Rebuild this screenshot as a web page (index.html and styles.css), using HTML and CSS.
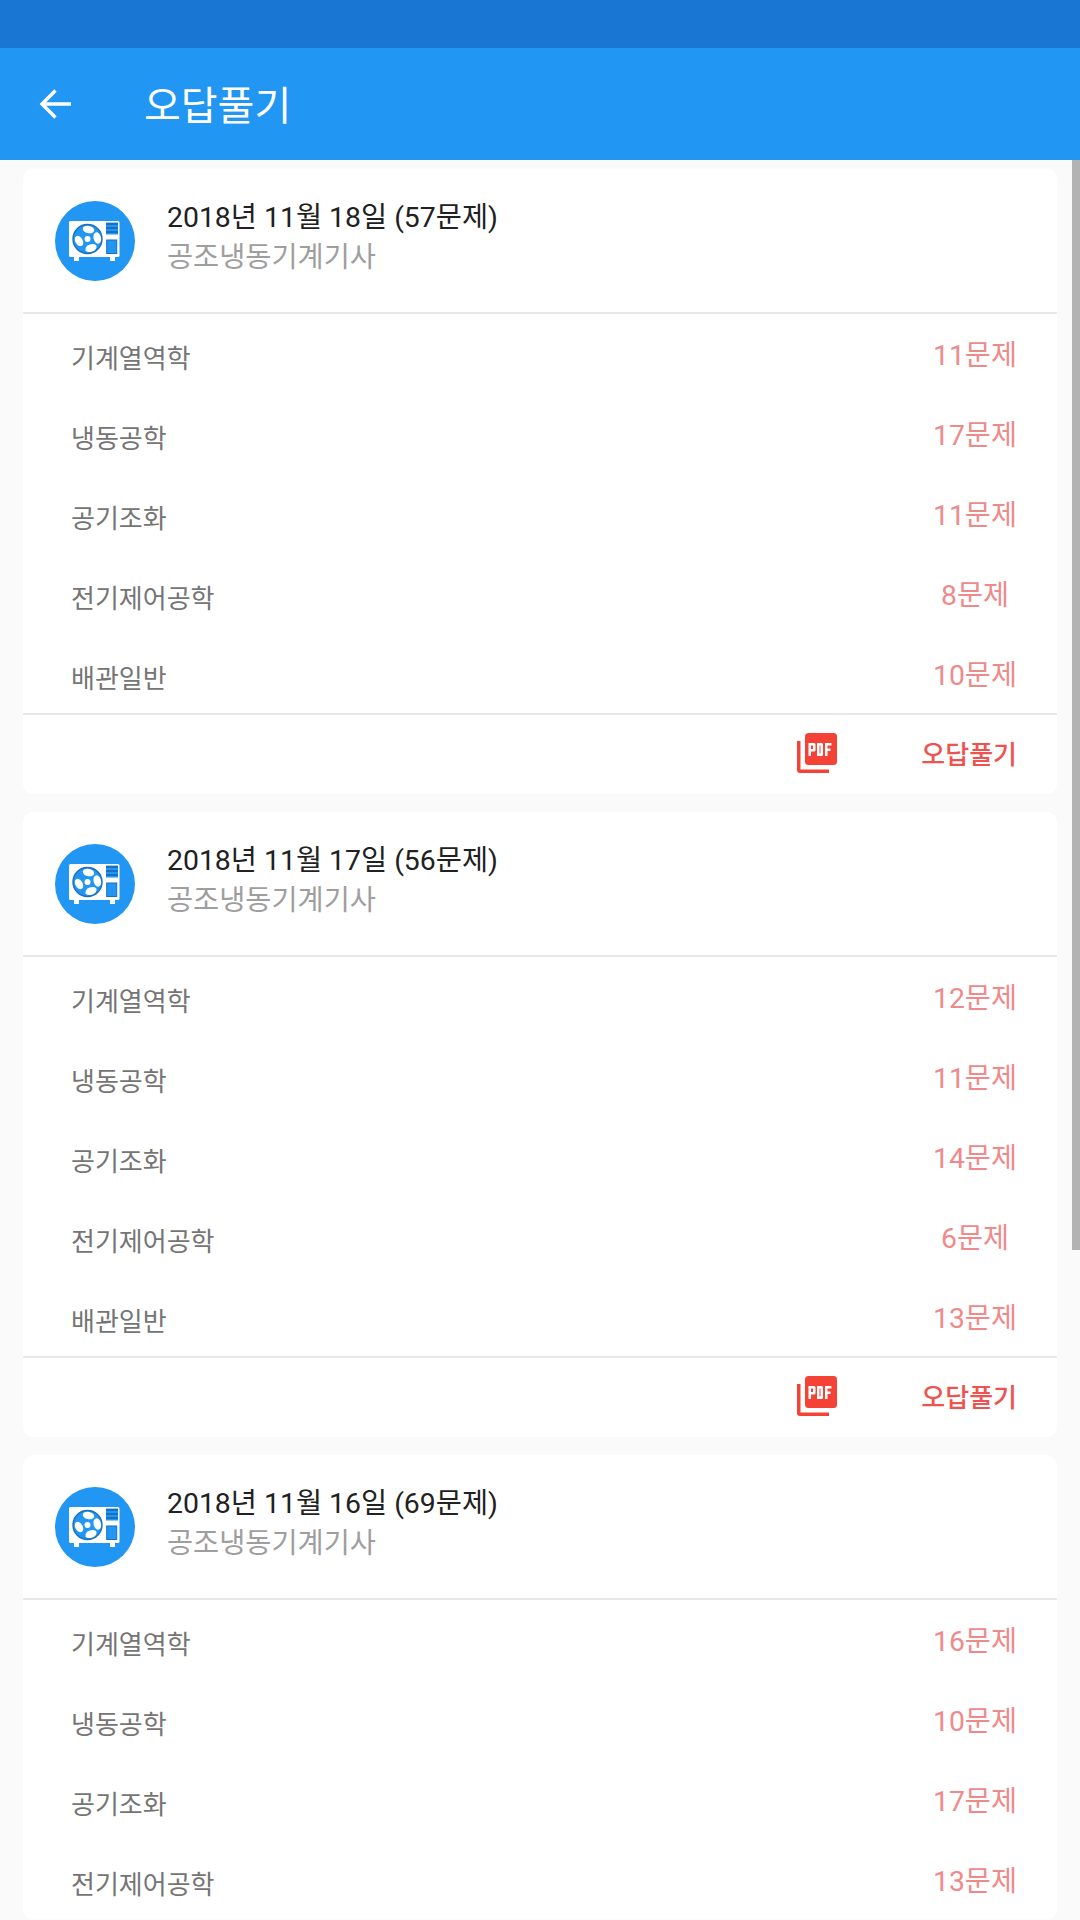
FILE: index.html
```html
<!DOCTYPE html>
<html lang="ko">
<head>
<meta charset="utf-8">
<title>오답풀기</title>
<link rel="stylesheet" href="styles.css">
</head>
<body>
<svg class="defs" width="0" height="0" aria-hidden="true">
  <defs>
    <symbol id="unit" viewBox="0 0 80 80">
      <circle cx="40" cy="40" r="40" fill="#2196F3"/>
      <path d="M15.500 20h47.500a1.500 1.500 0 0 1 1.500 1.500v33a1.500 1.500 0 0 1-1.500 1.500h-3v4h-5v-4H24v4h-5v-4h-3.500a1.500 1.500 0 0 1-1.500-1.500v-33a1.500 1.500 0 0 1 1.500-1.500z" fill="#fff"/>
      <circle cx="32.500" cy="38" r="14.500" fill="#2196F3" stroke="#1A6FBF" stroke-width="1.400"/>
      <g fill="#fff">
        <circle cx="32.500" cy="38" r="3"/>
        <ellipse cx="33.500" cy="28.500" rx="5.800" ry="3.700" transform="rotate(12 33.500 28.500)"/>
        <ellipse cx="42.300" cy="37" rx="3.700" ry="5.800" transform="rotate(-15 42.300 37)"/>
        <ellipse cx="36" cy="47" rx="5.800" ry="3.700" transform="rotate(-22 36 47)"/>
        <ellipse cx="24" cy="40" rx="3.700" ry="5.600" transform="rotate(-30 24 40)"/>
      </g>
      <rect x="51" y="21.500" width="12" height="12" fill="#2196F3"/>
      <g fill="#1A6FBF">
        <rect x="51" y="22" width="12" height="2"/>
        <rect x="51" y="26" width="12" height="2"/>
        <rect x="51" y="30" width="12" height="2"/>
      </g>
      <rect x="51.700" y="39" width="10" height="13.500" fill="#2196F3" stroke="#1A6FBF"/>
    </symbol>
    <symbol id="pdf" viewBox="0 0 40 40">
      <path d="M0 8h3.500v28.500H32V40H3a3 3 0 0 1-3-3z" fill="#F44336"/>
      <rect x="8" y="0" width="32" height="32" rx="3.500" fill="#F44336"/>
      <path d="M11.500 10h5.500a1.500 1.500 0 0 1 1.500 1.500v5.500a1.500 1.500 0 0 1-1.500 1.500h-3V23h-2.500zM14 12.500v3.500h2v-3.500zM20 10h4.500a1.500 1.500 0 0 1 1.500 1.500v10a1.500 1.500 0 0 1-1.500 1.500H20zM22.500 12.500v8h1v-8zM28 10h6.500v2.500h-4v3h3V18h-3v5H28z" fill="#fff" fill-rule="evenodd"/>
    </symbol>
  </defs>
</svg>

<div class="status-bar"></div>
<header class="app-bar">
  <svg class="back" viewBox="0 0 32 32" aria-hidden="true"><path d="M32 16H3M16.500 2.500 3 16l13.500 13.500" fill="none" stroke="#fff" stroke-width="3.400"/></svg>
  <h1 class="app-title">오답풀기</h1>
</header>

<main class="scroller">
  <div class="scrollbar"></div>
  <div class="list">

    <section class="card">
      <div class="card-head">
        <svg class="unit"><use href="#unit"/></svg>
        <div class="head-text">
          <div class="date">2018년 11월 18일 (57문제)</div>
          <div class="cert">공조냉동기계기사</div>
        </div>
      </div>
      <ul class="rows">
        <li class="row"><span class="subject">기계열역학</span><span class="count">11문제</span></li>
        <li class="row"><span class="subject">냉동공학</span><span class="count">17문제</span></li>
        <li class="row"><span class="subject">공기조화</span><span class="count">11문제</span></li>
        <li class="row"><span class="subject">전기제어공학</span><span class="count">8문제</span></li>
        <li class="row"><span class="subject">배관일반</span><span class="count">10문제</span></li>
      </ul>
      <div class="card-foot">
        <svg class="pdf"><use href="#pdf"/></svg>
        <span class="action">오답풀기</span>
      </div>
    </section>

    <section class="card">
      <div class="card-head">
        <svg class="unit"><use href="#unit"/></svg>
        <div class="head-text">
          <div class="date">2018년 11월 17일 (56문제)</div>
          <div class="cert">공조냉동기계기사</div>
        </div>
      </div>
      <ul class="rows">
        <li class="row"><span class="subject">기계열역학</span><span class="count">12문제</span></li>
        <li class="row"><span class="subject">냉동공학</span><span class="count">11문제</span></li>
        <li class="row"><span class="subject">공기조화</span><span class="count">14문제</span></li>
        <li class="row"><span class="subject">전기제어공학</span><span class="count">6문제</span></li>
        <li class="row"><span class="subject">배관일반</span><span class="count">13문제</span></li>
      </ul>
      <div class="card-foot">
        <svg class="pdf"><use href="#pdf"/></svg>
        <span class="action">오답풀기</span>
      </div>
    </section>

    <section class="card">
      <div class="card-head">
        <svg class="unit"><use href="#unit"/></svg>
        <div class="head-text">
          <div class="date">2018년 11월 16일 (69문제)</div>
          <div class="cert">공조냉동기계기사</div>
        </div>
      </div>
      <ul class="rows rows-open">
        <li class="row"><span class="subject">기계열역학</span><span class="count">16문제</span></li>
        <li class="row"><span class="subject">냉동공학</span><span class="count">10문제</span></li>
        <li class="row"><span class="subject">공기조화</span><span class="count">17문제</span></li>
        <li class="row"><span class="subject">전기제어공학</span><span class="count">13문제</span></li>
      </ul>
    </section>

  </div>
</main>
```

FILE: styles.css
```css
* { box-sizing: border-box; }
html, body { margin: 0; padding: 0; }
body {
  width: 1080px;
  height: 1920px;
  overflow: hidden;
  display: flex;
  flex-direction: column;
  background: #fafafa;
  font-family: Roboto, "Noto Sans CJK KR", sans-serif;
}
.defs { position: absolute; }
.status-bar { height: 48px; flex: none; background: #1976D2; }
.app-bar {
  height: 112px;
  flex: none;
  display: flex;
  align-items: center;
  padding-left: 39px;
  background: #2196F3;
}
.back { width: 32px; height: 32px; flex: none; }
.app-title {
  margin: 0 0 2px 73px;
  font-size: 40px;
  font-weight: 400;
  color: #fff;
}
.scroller { position: relative; flex: 1; overflow: hidden; }
.scrollbar {
  position: absolute;
  top: 0;
  right: 0;
  width: 8px;
  height: 1090px;
  background: #b3b3b3;
}
.list {
  display: flex;
  flex-direction: column;
  gap: 18px;
  padding: 9px 23px 0 23px;
}
.card { flex: none; background: #fff; border-radius: 10px; }
.card-head {
  height: 145px;
  display: flex;
  align-items: center;
  padding: 0 0 0 32px;
  border-bottom: 2px solid #e8e8e8;
}
.unit { width: 80px; height: 80px; flex: none; }
.head-text { margin-left: 32px; margin-top: -6px; }
.date { font-size: 28.4px; line-height: 39px; color: #212121; }
.cert { font-size: 28.4px; line-height: 39px; color: #9e9e9e; margin-top: 1px; }
.rows { margin: 0; padding: 0; list-style: none; border-bottom: 2px solid #e8e8e8; }
.rows-open { border-bottom: none; }
.row {
  height: 80px;
  display: flex;
  justify-content: space-between;
  padding: 11px 40px 0 48px;
}
.row:last-child { height: 79px; }
.subject { font-size: 26px; line-height: 68px; color: #757575; }
.count { width: 84px; text-align: center; font-size: 28.3px; line-height: 62px; color: #ef8a8a; }
.card-foot {
  height: 79px;
  display: flex;
  align-items: center;
  justify-content: flex-end;
  padding-right: 40px;
}
.pdf { width: 40px; height: 40px; flex: none; margin-right: 84px; margin-top: -4px; }
.action { font-size: 26px; font-weight: 500; color: #ef5350; margin-bottom: 5px; }
```
